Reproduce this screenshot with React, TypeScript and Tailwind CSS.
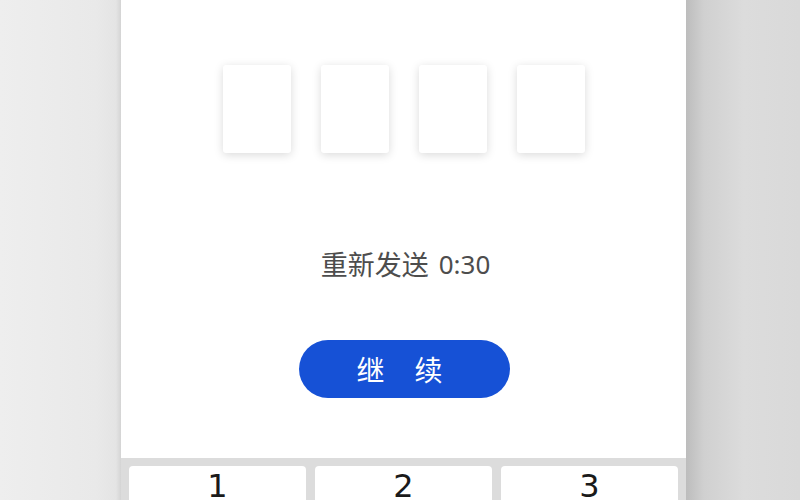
const digits = ['1', '2', '3'];

function CodeBox() {
  return (
    <div className="w-[68px] h-[88px] rounded-[3px] bg-white shadow-[0_2px_10px_rgba(0,0,0,0.15)]" />
  );
}

export default function App() {
  return (
    <div className="w-[800px] h-[500px] overflow-hidden flex bg-[linear-gradient(90deg,#eeeeee_0%,#e9e9e9_12%,#e4e4e4_14.5%,#d2d2d2_15.2%,#ffffff_15.2%,#ffffff_85.8%,#bdbdbd_85.8%,#d0d0d0_88%,#dcdcdc_93%,#d9d9d9_100%)]">
      <div className="ml-[121px] w-[565px] h-full bg-white flex flex-col items-center font-['Noto_Sans_CJK_SC',sans-serif]">
        {/* verification code inputs */}
        <div className="mt-[65px] flex gap-[30px] ml-[1px]">
          <CodeBox />
          <CodeBox />
          <CodeBox />
          <CodeBox />
        </div>

        <div className="mt-[97px] text-[27px] leading-none text-[#4d4d4d] flex items-center gap-[10px] pl-[4px]">
          <span>重新发送</span>
          <span className="font-['Noto_Sans','Noto_Sans_CJK_SC',sans-serif] text-[26px]">0:30</span>
        </div>

        <button className="mt-[63px] w-[211px] h-[58px] rounded-full bg-[#1651d6] text-white text-[28px] leading-none flex items-center justify-center gap-[30px] ml-[2px] pr-[10px]">
          <span>继</span>
          <span>续</span>
        </button>

        {/* numeric keypad */}
        <div className="mt-auto w-full h-[42px] bg-[#dcdcdc] pt-[8px] px-[8px] flex gap-[9px]">
          {digits.map((d) => (
            <div
              key={d}
              className="flex-1 bg-white rounded-t-[4px] flex justify-center pt-[4px] font-['DejaVu_Sans',sans-serif] text-[32px] leading-none text-[#1a1a1a]"
            >
              {d}
            </div>
          ))}
        </div>
      </div>
    </div>
  );
}
